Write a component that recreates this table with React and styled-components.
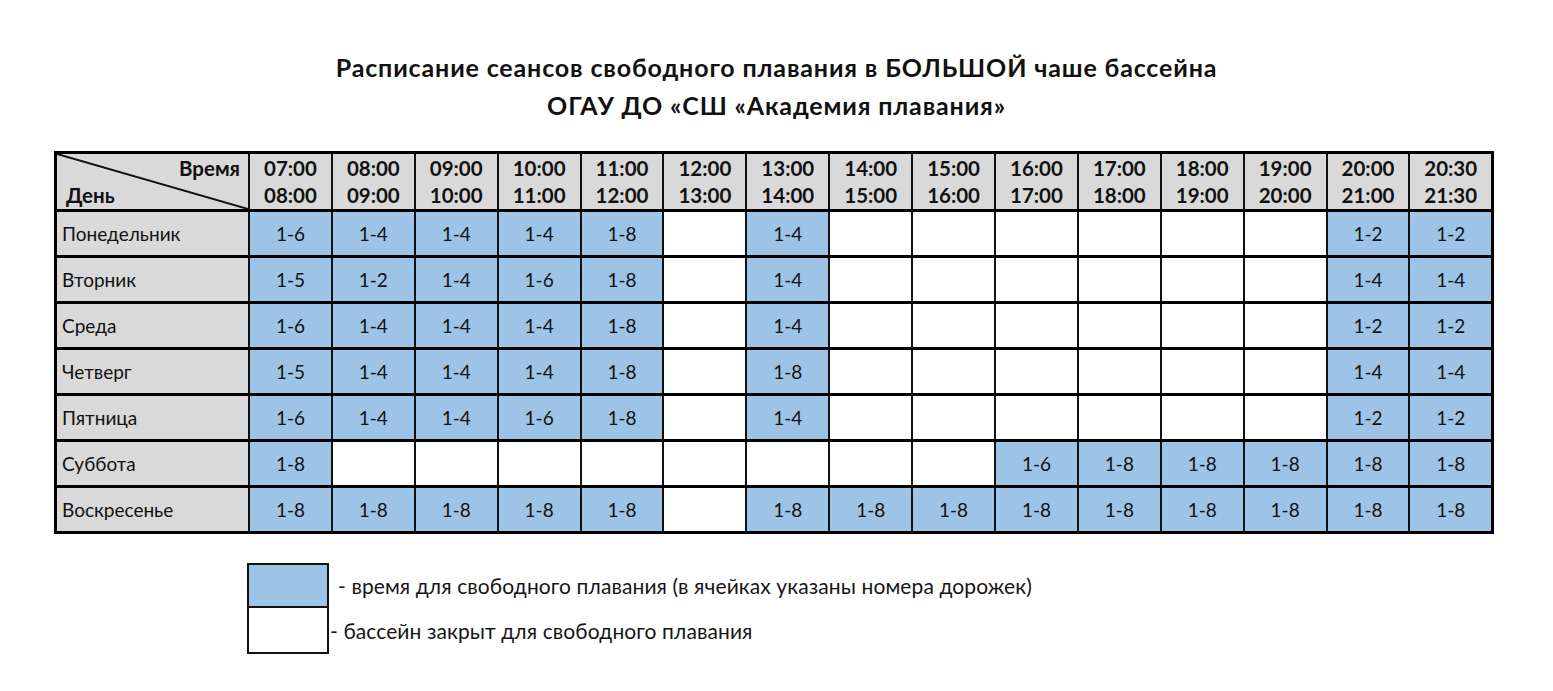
import styled, { createGlobalStyle } from "styled-components";

const Global = createGlobalStyle`
  html, body { margin: 0; padding: 0; background: #fff; }
  body { font-family: Lato, "Liberation Sans", sans-serif; color: #111; }
`;

const BLUE = "#9dc3e6";
const GRAY = "#d9d9d9";

const Page = styled.div`
  width: 1553px;
  height: 691px;
  padding-top: 48px;
  box-sizing: border-box;
  display: flex;
  flex-direction: column;
`;

const Title = styled.h1`
  margin: 0;
  text-align: center;
  font-size: 25px;
  line-height: 38px;
  letter-spacing: 0.85px;
  font-weight: 700;
  color: #111;
`;

const Table = styled.table`
  margin: 27px 0 0 54px;
  width: 1440px;
  border-collapse: collapse;
  table-layout: fixed;
  border: 3px solid #000;
`;

const HeadCell = styled.th`
  background: ${GRAY};
  border-left: 2px solid #111;
  border-bottom: 3px solid #000;
  height: 55px;
  padding: 0;
  font-size: 20.5px;
  line-height: 27px;
  font-weight: 700;
  text-align: center;
  vertical-align: middle;
`;

const Corner = styled.th`
  position: relative;
  background: ${GRAY};
  border-bottom: 3px solid #000;
  width: 191px;
  padding: 0;
  font-size: 20.5px;
  font-weight: 700;
  svg {
    position: absolute;
    inset: 0;
    width: 100%;
    height: 100%;
  }
`;

const CornerLabel = styled.div`
  display: flex;
  flex-direction: column;
  line-height: 27px;
  padding: 0 8px 0 9px;
  span:first-child { text-align: right; }
  span:last-child { text-align: left; }
`;

const DayCell = styled.td`
  background: ${GRAY};
  border-bottom: 3px solid #000;
  height: 43px;
  padding: 0 0 0 5px;
  font-size: 19px;
  text-align: left;
`;

const SlotCell = styled.td`
  background: ${(p) => (p.$lanes ? BLUE : "#fff")};
  border-left: 2px solid #111;
  border-bottom: 3px solid #000;
  padding: 0;
  font-size: 19px;
  text-align: center;
`;

const Legend = styled.div`
  margin: 29px 0 0 247px;
  display: grid;
  grid-template-columns: 82px auto;
  grid-auto-rows: 45px;
`;

const Swatch = styled.div`
  background: ${(p) => (p.$blue ? BLUE : "#fff")};
  border: 2px solid #111;
  border-top-width: ${(p) => (p.$blue ? 2 : 0)}px;
  box-sizing: border-box;
  height: ${(p) => (p.$blue ? 45 : 46)}px;
`;

const LegendText = styled.div`
  font-size: 21px;
  letter-spacing: 0.1px;
  display: flex;
  align-items: center;
  padding-left: ${(p) => p.$pad}px;
  color: #151515;
`;

const times = [
  ["07:00", "08:00"], ["08:00", "09:00"], ["09:00", "10:00"], ["10:00", "11:00"],
  ["11:00", "12:00"], ["12:00", "13:00"], ["13:00", "14:00"], ["14:00", "15:00"],
  ["15:00", "16:00"], ["16:00", "17:00"], ["17:00", "18:00"], ["18:00", "19:00"],
  ["19:00", "20:00"], ["20:00", "21:00"], ["20:30", "21:30"],
];

const _ = "";
const schedule = [
  ["Понедельник", ["1-6", "1-4", "1-4", "1-4", "1-8", _, "1-4", _, _, _, _, _, _, "1-2", "1-2"]],
  ["Вторник", ["1-5", "1-2", "1-4", "1-6", "1-8", _, "1-4", _, _, _, _, _, _, "1-4", "1-4"]],
  ["Среда", ["1-6", "1-4", "1-4", "1-4", "1-8", _, "1-4", _, _, _, _, _, _, "1-2", "1-2"]],
  ["Четверг", ["1-5", "1-4", "1-4", "1-4", "1-8", _, "1-8", _, _, _, _, _, _, "1-4", "1-4"]],
  ["Пятница", ["1-6", "1-4", "1-4", "1-6", "1-8", _, "1-4", _, _, _, _, _, _, "1-2", "1-2"]],
  ["Суббота", ["1-8", _, _, _, _, _, _, _, _, "1-6", "1-8", "1-8", "1-8", "1-8", "1-8"]],
  ["Воскресенье", ["1-8", "1-8", "1-8", "1-8", "1-8", _, "1-8", "1-8", "1-8", "1-8", "1-8", "1-8", "1-8", "1-8", "1-8"]],
];

export default function App() {
  return (
    <Page>
      <Global />
      <Title>
        Расписание сеансов свободного плавания в БОЛЬШОЙ чаше бассейна
        <br />
        ОГАУ ДО «СШ «Академия плавания»
      </Title>
      <Table>
        <thead>
          <tr>
            <Corner>
              <svg viewBox="0 0 100 100" preserveAspectRatio="none">
                <line x1="0" y1="0" x2="100" y2="100" stroke="#111" strokeWidth="2" vectorEffect="non-scaling-stroke" />
              </svg>
              <CornerLabel>
                <span>Время</span>
                <span>День</span>
              </CornerLabel>
            </Corner>
            {times.map(([a, b]) => (
              <HeadCell key={a + b}>
                {a}
                <br />
                {b}
              </HeadCell>
            ))}
          </tr>
        </thead>
        <tbody>
          {schedule.map(([day, slots]) => (
            <tr key={day}>
              <DayCell>{day}</DayCell>
              {slots.map((s, i) => (
                <SlotCell key={i} $lanes={!!s}>{s}</SlotCell>
              ))}
            </tr>
          ))}
        </tbody>
      </Table>
      <Legend>
        <Swatch $blue />
        <LegendText $pad={9}>- время для свободного плавания (в ячейках указаны номера дорожек)</LegendText>
        <Swatch />
        <LegendText $pad={1}>- бассейн закрыт для свободного плавания</LegendText>
      </Legend>
    </Page>
  );
}
